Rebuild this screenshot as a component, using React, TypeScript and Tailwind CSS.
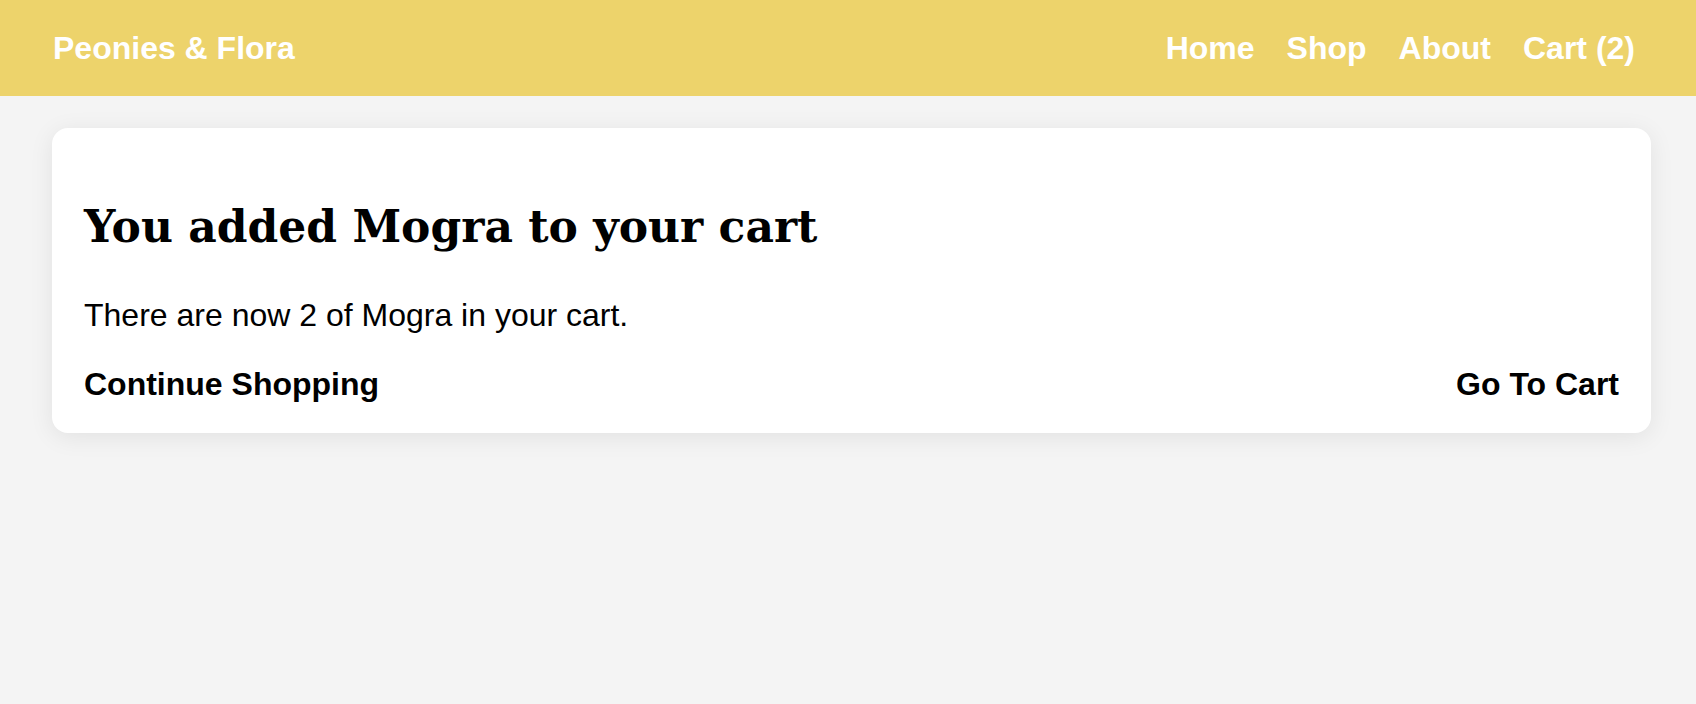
import React from 'react';

export default function App() {
  const cartCount = 2;
  const product = 'Mogra';

  return (
    <div className="min-h-screen bg-[#f4f4f4] font-['Liberation_Sans',Arial,sans-serif] text-black">
      {/* Header */}
      <header className="h-[96px] bg-[#edd36b] flex items-center justify-between pl-[53px] pr-[61px]">
        <a href="#" className="text-[32px] font-bold text-white leading-none">
          Peonies &amp; Flora
        </a>
        <nav className="flex items-center gap-[32px] text-[32px] font-bold text-white leading-none">
          <a href="#">Home</a>
          <a href="#">Shop</a>
          <a href="#">About</a>
          <a href="#">Cart ({cartCount})</a>
        </nav>
      </header>

      {/* Added-to-cart card */}
      <main className="pl-[52px] pr-[45px] pt-[32px]">
        <div className="bg-white rounded-[16px] shadow-[0_4px_24px_rgba(0,0,0,0.08)] px-[32px] pt-[73px] pb-[31px]">
          <h1 className="font-['DejaVu_Serif',Georgia,serif] font-bold text-[44px] leading-[1.2]">
            You added {product} to your cart
          </h1>
          <p className="mt-[43px] text-[32px] leading-[1.15]">
            There are now {cartCount} of {product} in your cart.
          </p>
          <div className="mt-[32px] flex items-center justify-between text-[32px] font-bold leading-[1.15]">
            <a href="#">Continue Shopping</a>
            <a href="#">Go To Cart</a>
          </div>
        </div>
      </main>
    </div>
  );
}
